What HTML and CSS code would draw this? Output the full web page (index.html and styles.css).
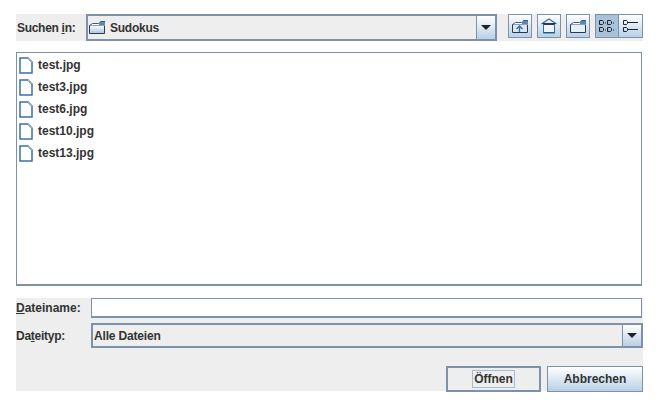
FILE: index.html
```html
<!DOCTYPE html>
<html lang="de">
<head>
<meta charset="utf-8">
<title>Öffnen</title>
<link rel="stylesheet" href="styles.css">
</head>
<body>
<main class="dialog">
  <div class="top-row">
    <label class="look-label">Suchen <u>i</u>n:</label>
    <div class="combo look-combo">
      <div class="combo-value">
        <svg class="folder-icon" width="16" height="13" viewBox="0 0 16 13"><defs><linearGradient id="fg" x1="0" y1="0" x2="0" y2="1"><stop offset="0" stop-color="#fff"/><stop offset="1" stop-color="#a9c3e0"/></linearGradient></defs><path d="M.5 4.500h15v8H.5z" fill="url(#fg)" stroke="#2b3a4a"/><path d="M.5 4.500l3-2h6l2-2h4.500v4" fill="#fff" stroke="#3c5a80"/><path d="M10 1h6v3h-6z" fill="#5e84b8"/></svg>
        <span class="tight">Sudokus</span>
      </div>
      <div class="combo-arrow"><span class="triangle"></span></div>
    </div>
    <div class="tools">
      <button class="tool">
        <svg width="16" height="13" viewBox="0 0 16 13"><path d="M.5 4.500h15v8H.5z" fill="#dbe7f3" stroke="#2b3a4a"/><path d="M.5 4.500l3-2h6l2-2h4.500v4" fill="#fff" stroke="#3c5a80"/><path d="M10 1h6v3h-6z" fill="#5e84b8"/><path d="M7.500 12V7M4.500 9l3-3 3 3" fill="none" stroke="#2f6ca8" stroke-width="1.300"/></svg>
      </button>
      <button class="tool">
        <svg width="16" height="16" viewBox="0 0 16 16"><path d="M2.500 6.500h11v8h-11z" fill="#eef4fa" stroke="#2b3a4a"/><path d="M.5 6l7.500-5 7.500 5" fill="none" stroke="#3c6ea5" stroke-width="1.200"/><path d="M1.500 5.500h13" stroke="#2b3a4a"/><path d="M2 15h12" stroke="#2f6ca8"/><path d="M2.500 7v8M13.500 7v8" stroke="#2f6ca8"/></svg>
      </button>
      <button class="tool">
        <svg width="16" height="13" viewBox="0 0 16 13"><path d="M.5 4.500h15v8H.5z" fill="#e6eef6" stroke="#2b3a4a"/><path d="M.5 4.500l3-2h6l2-2h4.500v4" fill="#fff" stroke="#3c5a80"/><path d="M10 1h6v3h-6z" fill="#5e84b8"/></svg>
      </button>
      <div class="view-toggle">
        <button class="tool toggle selected">
          <svg width="16" height="14" viewBox="0 0 16 14"><g fill="none" stroke="#1c2530"><path d="M.5 1.500h3l1 1v2l-1 1h-3zM8.500 1.500h3l1 1v2l-1 1h-3zM.5 8.500h3l1 1v2l-1 1h-3zM8.500 8.500h3l1 1v2l-1 1h-3z"/></g><path d="M6 4h1M14 4h1M6 11h1M14 11h1" stroke="#1c2530"/></svg>
        </button>
        <button class="tool toggle">
          <svg width="15" height="14" viewBox="0 0 15 14"><g fill="none" stroke="#1c2530"><path d="M.5 1.500h3l1 1v2l-1 1h-3zM.5 8.500h3l1 1v2l-1 1h-3z"/></g><path d="M5 3.500h10M5 10.500h10" stroke="#1c2530"/></svg>
        </button>
      </div>
    </div>
  </div>

  <ul class="file-list">
    <li class="file"><svg class="file-icon" width="14" height="17" viewBox="0 0 14 17"><path d="M1 1h8l4 4v11H1z" fill="#fff" stroke="#3a70aa" stroke-width="1.500"/><path d="M9 1l4 4" fill="none" stroke="#8fb2d6"/></svg>test.jpg</li>
    <li class="file"><svg class="file-icon" width="14" height="17" viewBox="0 0 14 17"><path d="M1 1h8l4 4v11H1z" fill="#fff" stroke="#3a70aa" stroke-width="1.500"/><path d="M9 1l4 4" fill="none" stroke="#8fb2d6"/></svg>test3.jpg</li>
    <li class="file"><svg class="file-icon" width="14" height="17" viewBox="0 0 14 17"><path d="M1 1h8l4 4v11H1z" fill="#fff" stroke="#3a70aa" stroke-width="1.500"/><path d="M9 1l4 4" fill="none" stroke="#8fb2d6"/></svg>test6.jpg</li>
    <li class="file"><svg class="file-icon" width="14" height="17" viewBox="0 0 14 17"><path d="M1 1h8l4 4v11H1z" fill="#fff" stroke="#3a70aa" stroke-width="1.500"/><path d="M9 1l4 4" fill="none" stroke="#8fb2d6"/></svg>test10.jpg</li>
    <li class="file"><svg class="file-icon" width="14" height="17" viewBox="0 0 14 17"><path d="M1 1h8l4 4v11H1z" fill="#fff" stroke="#3a70aa" stroke-width="1.500"/><path d="M9 1l4 4" fill="none" stroke="#8fb2d6"/></svg>test13.jpg</li>
  </ul>

  <div class="bottom">
    <div class="form-grid">
      <label class="form-label"><u>D</u>ateiname:</label>
      <div class="name-field"></div>
      <label class="form-label tight">Da<u>t</u>eityp:</label>
      <div class="combo type-combo">
        <div class="combo-value"><span class="tight-soft">Alle Dateien</span></div>
        <div class="combo-arrow"><span class="triangle"></span></div>
      </div>
    </div>
    <div class="actions">
      <button class="btn default"><span class="focus">Öffnen</span></button>
      <button class="btn">Abbrechen</button>
    </div>
  </div>
</main>
</body>
</html>
```
FILE: styles.css
```css
* { box-sizing: border-box; }
html, body { margin: 0; padding: 0; background: #fff; }
body { font: bold 12px "Liberation Sans", Arial, sans-serif; color: #333; }
.dialog { width: 662px; height: 411px; padding: 14px 19px 0 16px; }
u { text-underline-offset: 1px; }
.tight { letter-spacing: -0.25px; }
.tight-soft { letter-spacing: -0.17px; }

.top-row { display: flex; align-items: center; height: 27px; background: #eeeeee; }
.look-label { width: 70px; padding-left: 1px; letter-spacing: -0.3px; }
.combo { display: flex; border: 2px solid #7d92a8; background: #eeeeee; }
.look-combo { width: 411px; height: 27px; }
.combo-value { flex: 1; display: flex; align-items: center; gap: 5px; border: 1px solid #eeeeee; border-right: 0; }
.folder-icon { flex: none; }
.combo-arrow { width: 19px; display: flex; align-items: center; justify-content: center; border-left: 1px solid #7d92a8; background: linear-gradient(#ffffff, #b8d0e6); }
.triangle { width: 0; height: 0; border-top: 5px solid #222; border-left: 5.500px solid transparent; border-right: 5.500px solid transparent; }

.tools { display: flex; margin-left: 11px; gap: 5px; align-items: center; margin-top: -3px; }
.tool { width: 24px; height: 24px; padding: 0; border: 1px solid #7d92a8; background: linear-gradient(#ffffff, #b8d0e6); display: flex; align-items: center; justify-content: center; }
.view-toggle { display: flex; }
.toggle + .toggle { border-left: 0; }
.toggle.selected { background: #a9c2da; }

.file-list { list-style: none; margin: 11px 1px 12px 0; padding: 1px 0 0 2px; height: 234px; border: 1px solid #7d92a8; border-width: 1px 1px 2px 1px; background: #fff; }
.file { display: flex; align-items: center; gap: 5px; height: 22px; color: #333; }
.file-icon { flex: none; }

.bottom { height: 93px; background: #eeeeee; }
.form-grid { display: grid; grid-template-columns: 75px 1fr; grid-template-rows: 20px 25px; row-gap: 5px; align-items: center; }
.name-field { height: 20px; margin-right: 1px; background: #fff; border: 1px solid #7d92a8; border-bottom-width: 2px; }
.type-combo { height: 25px; }

.actions { display: flex; justify-content: flex-end; gap: 6px; margin-top: 18px; }
.btn { width: 96px; height: 26px; padding: 0; font: inherit; color: #333; border: 1px solid #7d92a8; background: linear-gradient(#ffffff, #b8d0e6); display: flex; align-items: center; justify-content: center; }
.btn.default { width: 95px; border: 2px solid #7d92a8; background: #eeeeee; }
.focus { border: 1px solid #a3bfd8; padding: 0 1px; line-height: 16px; }
```
